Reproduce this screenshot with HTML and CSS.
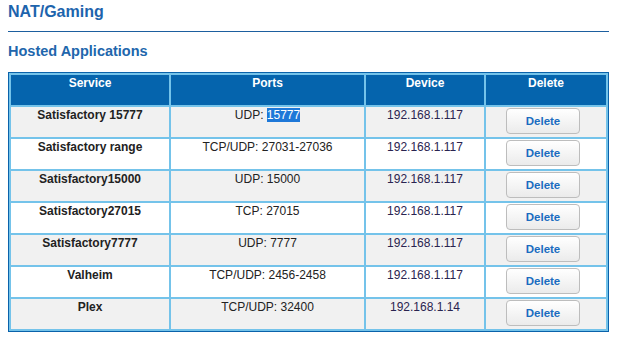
FILE: index.html
```html
<!DOCTYPE html>
<html>
<head>
<meta charset="utf-8">
<link rel="stylesheet" href="styles.css">
</head>
<body>
<div class="page">
  <h1 class="title">NAT/Gaming</h1>
  <h2 class="subtitle">Hosted Applications</h2>
  <table class="apps">
    <colgroup>
      <col class="c-service">
      <col class="c-ports">
      <col class="c-device">
      <col class="c-delete">
    </colgroup>
    <thead>
      <tr class="head">
        <th>Service</th><th>Ports</th><th>Device</th><th>Delete</th>
      </tr>
    </thead>
    <tbody>
      <tr class="odd">
        <td class="svc">Satisfactory 15777</td>
        <td>UDP: <span class="sel">15777</span></td>
        <td class="dev">192.168.1.117</td>
        <td><button class="del">Delete</button></td>
      </tr>
      <tr class="even">
        <td class="svc">Satisfactory range</td>
        <td>TCP/UDP: 27031-27036</td>
        <td class="dev">192.168.1.117</td>
        <td><button class="del">Delete</button></td>
      </tr>
      <tr class="odd">
        <td class="svc">Satisfactory15000</td>
        <td>UDP: 15000</td>
        <td class="dev">192.168.1.117</td>
        <td><button class="del">Delete</button></td>
      </tr>
      <tr class="even">
        <td class="svc">Satisfactory27015</td>
        <td>TCP: 27015</td>
        <td class="dev">192.168.1.117</td>
        <td><button class="del">Delete</button></td>
      </tr>
      <tr class="odd">
        <td class="svc">Satisfactory7777</td>
        <td>UDP: 7777</td>
        <td class="dev">192.168.1.117</td>
        <td><button class="del">Delete</button></td>
      </tr>
      <tr class="even">
        <td class="svc">Valheim</td>
        <td>TCP/UDP: 2456-2458</td>
        <td class="dev">192.168.1.117</td>
        <td><button class="del">Delete</button></td>
      </tr>
      <tr class="odd">
        <td class="svc">Plex</td>
        <td>TCP/UDP: 32400</td>
        <td class="dev">192.168.1.14</td>
        <td><button class="del">Delete</button></td>
      </tr>
    </tbody>
  </table>
</div>
</body>
</html>
```

FILE: styles.css
```css
html, body {
  margin: 0;
  padding: 0;
  background: #ffffff;
}

.page {
  padding: 3px 11px 0 8px;
  font-family: "Liberation Sans", Arial, sans-serif;
  width: 601px;
}

.title {
  margin: 0;
  font-size: 16px;
  line-height: 18px;
  font-weight: bold;
  color: #1d64ad;
  padding-bottom: 10px;
  border-bottom: 1px solid #1d5f9f;
}

.subtitle {
  margin: 11px 0 13px 0;
  font-size: 14.5px;
  line-height: 16px;
  font-weight: bold;
  color: #2166ac;
}

.apps {
  width: 601px;
  table-layout: fixed;
  border-collapse: separate;
  border-spacing: 2px;
  border: 1px solid #0a62aa;
  background: #74c3ea;
  font-size: 12px;
}

.c-service { width: 158px; }
.c-ports { width: 193px; }
.c-device { width: 118px; }
.c-delete { width: 120px; }

.apps th,
.apps td {
  padding: 1px 0 0 0;
  text-align: center;
  vertical-align: top;
  line-height: 14px;
  box-sizing: border-box;
}

.head {
  height: 30px;
}

.apps th {
  background: #0564ad;
  color: #ffffff;
  font-weight: bold;
}

.apps tbody tr {
  height: 30px;
}

.odd td {
  background: #f1f1f1;
}

.even td {
  background: #ffffff;
}

.apps td {
  color: #222222;
}

.apps td.svc {
  font-weight: bold;
}

.apps td.dev {
  color: #2a2450;
}

.sel {
  background: #1e78d8;
  color: #ffffff;
}

.del {
  display: block;
  margin: 0 auto 0 20px;
  width: 74px;
  height: 26px;
  padding: 0;
  border: 1px solid #bdbdbd;
  border-radius: 4px;
  background: linear-gradient(#ffffff, #ebebeb);
  color: #1a6cc0;
  font-family: "Liberation Sans", Arial, sans-serif;
  font-size: 11.5px;
  font-weight: bold;
  line-height: 24px;
  text-align: center;
}
```
